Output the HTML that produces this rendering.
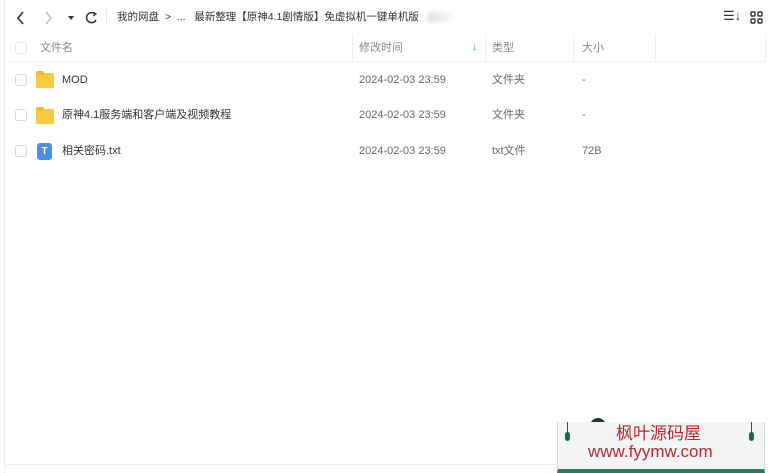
<!DOCTYPE html>
<html><head><meta charset="utf-8"><style>
*{margin:0;padding:0;box-sizing:border-box}
body{width:768px;height:473px;background:#fff;font-family:"Liberation Sans","Noto Sans CJK SC",sans-serif;position:relative;overflow:hidden;color:#333}
.a{position:absolute}
.t{font-size:11px;white-space:nowrap;line-height:14px}
.cb{position:absolute;width:12px;height:12px;border:1px solid #d8d8d8;border-radius:3px;background:#fff}
.g{color:#666;font-size:11px}
.fold{position:absolute;width:18px;height:15px;background:#f9c940;border-radius:2px}
.fold:before{content:"";position:absolute;left:0;top:-2px;width:8px;height:4px;background:#f5b82e;border-radius:2px 2px 0 0}
</style></head><body>
<div class="a" style="left:4px;top:0;width:1px;height:473px;background:#eee"></div>
<div class="a" style="left:4px;top:464px;width:764px;height:1px;background:#eee"></div>
<svg class="a" style="left:14px;top:9px" width="90" height="18">
<path d="M9 3 L4 9 L9 15" stroke="#333" stroke-width="1.6" fill="none"/>
<path d="M32 3 L37 9 L32 15" stroke="#bbb" stroke-width="1.4" fill="none"/>
<path d="M54 7 L60 7 L57 11Z" fill="#333"/>
<path d="M81 5 A5 5 0 1 0 82 11" stroke="#333" stroke-width="1.5" fill="none"/><path d="M79 3 L82 5 L79 7" stroke="#333" stroke-width="1.3" fill="none"/>
</svg>
<div class="a" style="left:106px;top:9px;width:1px;height:16px;background:#e5e5e5"></div>
<div class="a t" style="left:117px;top:10px;color:#333;font-size:10.5px">我的网盘 &nbsp;&gt;&nbsp; ... &nbsp;&nbsp;最新整理【原神4.1剧情版】免虚拟机一键单机版</div>
<div class="a" style="left:428px;top:12px;width:30px;height:10px;background:linear-gradient(90deg,#ddd,#fff);filter:blur(2px)"></div>
<div class="a t" style="left:723px;top:9px;font-size:13px;color:#333">☰↓</div>
<svg class="a" style="left:750px;top:11px" width="13" height="13"><g fill="none" stroke="#333" stroke-width="1.4"><rect x="1" y="1" width="4" height="4" rx="1"/><rect x="8" y="1" width="4" height="4" rx="1"/><rect x="1" y="8" width="4" height="4" rx="1"/><rect x="8" y="8" width="4" height="4" rx="1"/></g></svg>
<div class="a" style="left:5px;top:61px;width:760px;height:1px;background:#f0f0f0"></div>
<div class="a" style="left:352px;top:35px;width:1px;height:26px;background:#f0f0f0"></div>
<div class="a" style="left:485px;top:35px;width:1px;height:26px;background:#f0f0f0"></div>
<div class="a" style="left:573px;top:35px;width:1px;height:26px;background:#f0f0f0"></div>
<div class="a" style="left:655px;top:35px;width:1px;height:26px;background:#f0f0f0"></div>
<div class="a" style="left:765px;top:35px;width:1px;height:26px;background:#f0f0f0"></div>
<div class="cb" style="left:15px;top:42px;border-color:#e5e5e5"></div>
<div class="a t g" style="left:40px;top:41px;color:#888">文件名</div>
<div class="a t g" style="left:359px;top:41px;color:#888">修改时间</div>
<div class="a t" style="left:472px;top:40px;color:#3a9ad9;font-size:11px">↓</div>
<div class="a t g" style="left:492px;top:41px;color:#888">类型</div>
<div class="a t g" style="left:582px;top:41px;color:#888">大小</div>

<div class="cb" style="left:15px;top:74px"></div>
<div class="fold" style="left:36px;top:73px"></div>
<div class="a t" style="left:62px;top:73px">MOD</div>
<div class="a t g" style="left:359px;top:73px">2024-02-03 23:59</div>
<div class="a t g" style="left:492px;top:73px">文件夹</div>
<div class="a t g" style="left:582px;top:73px">-</div>

<div class="cb" style="left:15px;top:109px"></div>
<div class="fold" style="left:36px;top:109px"></div>
<div class="a t" style="left:62px;top:108px">原神4.1服务端和客户端及视频教程</div>
<div class="a t g" style="left:359px;top:108px">2024-02-03 23:59</div>
<div class="a t g" style="left:492px;top:108px">文件夹</div>
<div class="a t g" style="left:582px;top:108px">-</div>

<div class="cb" style="left:15px;top:145px"></div>
<div class="a" style="left:37px;top:143px;width:15px;height:17px;background:#4a90e2;border-radius:3px;color:#fff;font-size:10px;font-weight:bold;text-align:center;line-height:17px">T</div>
<div class="a t" style="left:62px;top:144px">相关密码.txt</div>
<div class="a t g" style="left:359px;top:144px">2024-02-03 23:59</div>
<div class="a t g" style="left:492px;top:144px">txt文件</div>
<div class="a t g" style="left:582px;top:144px">72B</div>

<div class="a" style="left:590px;top:418px;width:16px;height:8px;background:#1d3a2c;border-radius:8px 8px 0 0"></div>
<div class="a" style="left:557px;top:422px;width:208px;height:51px;background:#f3f4f6;border-bottom:4px solid #2f7a56;border-left:1px solid #cfd6d2;border-right:1px solid #cfd6d2"></div>
<div class="a" style="left:567px;top:422px;width:1px;height:12px;background:#1d5a3c"></div>
<div class="a" style="left:565px;top:432px;width:5px;height:9px;background:#1d6a44;border-radius:3px"></div>
<div class="a" style="left:751px;top:422px;width:1px;height:12px;background:#1d5a3c"></div>
<div class="a" style="left:749px;top:432px;width:5px;height:9px;background:#1d6a44;border-radius:3px"></div>
<div class="a t" style="left:616px;top:424px;font-size:17px;line-height:20px;color:#b52a2e">枫叶源码屋</div>
<div class="a t" style="left:588px;top:442px;font-size:17px;line-height:20px;color:#b52a2e">www.fyymw.com</div>
</body></html>
